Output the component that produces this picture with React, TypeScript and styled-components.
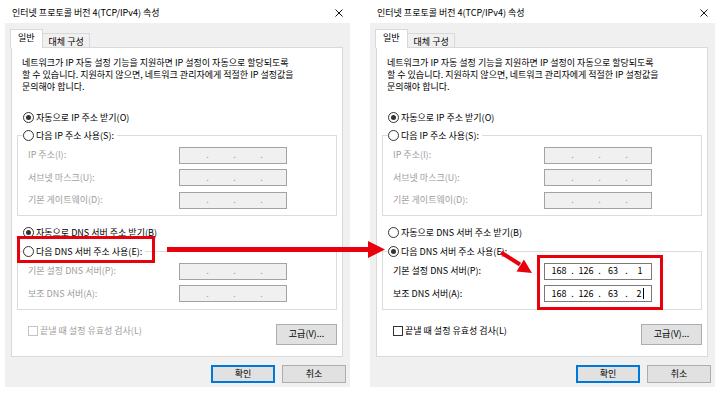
import React from 'react';
import styled, { createGlobalStyle } from 'styled-components';

const GlobalStyle = createGlobalStyle`
  html, body {
    margin: 0;
    padding: 0;
    background: #fff;
  }
  body {
    font-family: "Noto Sans CJK KR", "Noto Sans", sans-serif;
    font-size: 9px;
    color: #000;
  }
  * {
    box-sizing: border-box;
  }
`;

const Page = styled.div`
  position: relative;
  width: 720px;
  height: 393px;
  display: flex;
  justify-content: space-between;
  overflow: hidden;
  background: #fff;
`;

const Window = styled.div`
  width: 355px;
  display: flex;
  flex-direction: column;
`;

const TitleBar = styled.div`
  height: 23px;
  display: flex;
  align-items: center;
  justify-content: space-between;
  padding: 3px 12px 0 12px;
`;

const Title = styled.span`
  font-size: 9px;
  line-height: 12px;
`;

const Body = styled.div`
  margin: 0 5px;
  height: 364px;
  background: #f0f0f0;
  padding: 6px 4px 4px 6px;
  display: flex;
  flex-direction: column;
`;

const TabRow = styled.div`
  height: 18px;
  display: flex;
  align-items: flex-end;
  position: relative;
  z-index: 1;
`;

const Tab = styled.div<{ $active?: boolean }>`
  height: ${(p) => (p.$active ? '19px' : '14px')};
  margin-bottom: ${(p) => (p.$active ? '-1px' : '0')};
  margin-left: ${(p) => (p.$active ? '-1px' : '0')};
  padding: ${(p) => (p.$active ? '2px 7px 0 7px' : '2px 5px 0 6px')};
  background: ${(p) => (p.$active ? '#fff' : '#f0f0f0')};
  border: 1px solid #d9d9d9;
  border-bottom: none;
  border-left: ${(p) => (p.$active ? '1px solid #d9d9d9' : 'none')};
  line-height: 12px;
`;

const Panel = styled.div`
  height: 310px;
  margin-right: 3px;
  background: #fff;
  border: 1px solid #d9d9d9;
  padding: 9px 5px 0 5px;
  display: flex;
  flex-direction: column;
`;

const Description = styled.p`
  margin: 0 0 0 5px;
  line-height: 12px;
`;

const RadioRow = styled.div<{ $mt: number }>`
  height: 13px;
  margin-top: ${(p) => p.$mt}px;
  padding-left: 6px;
  display: flex;
  align-items: center;
  gap: 2px;
`;

const Legend = styled.div`
  height: 13px;
  margin: -7px 0 0 5px;
  padding-right: 3px;
  width: fit-content;
  background: #fff;
  display: flex;
  align-items: center;
  gap: 2px;
`;

const Radio = styled.span<{ $checked?: boolean }>`
  width: 11px;
  height: 11px;
  border: 1px solid #333;
  border-radius: 50%;
  background: #fff;
  display: inline-flex;
  align-items: center;
  justify-content: center;
  flex: none;
  &::after {
    content: '';
    width: 5px;
    height: 5px;
    border-radius: 50%;
    background: ${(p) => (p.$checked ? '#333' : 'transparent')};
  }
`;

const GroupBox = styled.div<{ $mt: number }>`
  margin-top: ${(p) => p.$mt}px;
  border: 1px solid #dcdcdc;
`;

const FieldGrid = styled.div`
  display: grid;
  grid-template-columns: 151px 108px;
  grid-auto-rows: 17px;
  row-gap: 5.5px;
  padding: 4.5px 0 6.5px 10px;
  align-items: center;
`;

const Label = styled.span<{ $disabled?: boolean }>`
  color: ${(p) => (p.$disabled ? '#9d9d9d' : '#000')};
  line-height: 12px;
`;

const IpBox = styled.div<{ $disabled?: boolean }>`
  height: 17px;
  width: 108px;
  padding-left: 3px;
  display: flex;
  align-items: center;
  background: ${(p) => (p.$disabled ? '#f0f0f0' : '#fff')};
  border: 1px solid ${(p) => (p.$disabled ? '#a3a3a3' : '#7a7a7a')};
  color: ${(p) => (p.$disabled ? '#a0a0a0' : '#000')};
  line-height: 12px;
`;

const Octet = styled.span`
  width: 22px;
  text-align: center;
  display: inline-flex;
  justify-content: center;
  align-items: center;
`;

const Dot = styled.span`
  width: 5px;
  text-align: center;
`;

const Caret = styled.span`
  display: inline-block;
  width: 1px;
  height: 11px;
  margin-left: 1px;
  background: #000;
`;

const OptionsRow = styled.div`
  margin-top: 14px;
  padding-left: 11px;
  display: flex;
  align-items: flex-start;
  justify-content: space-between;
`;

const CheckLabel = styled.label<{ $disabled?: boolean }>`
  margin-top: 1px;
  display: flex;
  align-items: center;
  gap: 2px;
  line-height: 12px;
  color: ${(p) => (p.$disabled ? '#9d9d9d' : '#000')};
`;

const CheckBox = styled.span<{ $disabled?: boolean }>`
  width: 10px;
  height: 10px;
  background: #fff;
  border: 1px solid ${(p) => (p.$disabled ? '#c4c4c4' : '#333')};
  flex: none;
`;

const Button = styled.button<{ $default?: boolean; $w: number; $h: number }>`
  width: ${(p) => p.$w}px;
  height: ${(p) => p.$h}px;
  padding: 0;
  font: inherit;
  color: #000;
  background: #e1e1e1;
  border: 1px solid ${(p) => (p.$default ? '#0078d7' : '#adadad')};
  box-shadow: ${(p) => (p.$default ? 'inset 0 0 0 1px #0078d7' : 'none')};
  line-height: 12px;
`;

const Footer = styled.div`
  margin-top: 8px;
  display: flex;
  justify-content: flex-end;
  gap: 7px;
`;

const Overlay = styled.svg`
  position: absolute;
  left: 0;
  top: 0;
  pointer-events: none;
`;

const CloseIcon = () => (
  <svg width="8" height="8" viewBox="0 0 8 8">
    <path d="M0.5 0.5 L7.5 7.5 M7.5 0.5 L0.5 7.5" stroke="#111" strokeWidth="1" />
  </svg>
);

const IpField = ({ value, disabled, caret }: { value?: string[]; disabled?: boolean; caret?: boolean }) => {
  const parts = value ?? ['', '', '', ''];
  return (
    <IpBox $disabled={disabled}>
      {parts.map((v, i) => (
        <React.Fragment key={i}>
          <Octet>
            {v}
            {caret && i === 3 && <Caret />}
          </Octet>
          {i < 3 && <Dot>.</Dot>}
        </React.Fragment>
      ))}
    </IpBox>
  );
};

const Dialog = ({ manualDns }: { manualDns: boolean }) => (
  <Window>
    <TitleBar>
      <Title>인터넷 프로토콜 버전 4(TCP/IPv4) 속성</Title>
      <CloseIcon />
    </TitleBar>
    <Body>
      <TabRow>
        <Tab $active>일반</Tab>
        <Tab>대체 구성</Tab>
      </TabRow>
      <Panel>
        <Description>
          네트워크가 IP 자동 설정 기능을 지원하면 IP 설정이 자동으로 할당되도록
          <br />할 수 있습니다. 지원하지 않으면, 네트워크 관리자에게 적절한 IP 설정값을
          <br />문의해야 합니다.
        </Description>
        <RadioRow $mt={17.5}>
          <Radio $checked />
          <span>자동으로 IP 주소 받기(O)</span>
        </RadioRow>
        <GroupBox $mt={11.5}>
          <Legend>
            <Radio />
            <span>다음 IP 주소 사용(S):</span>
          </Legend>
          <FieldGrid>
            <Label $disabled>IP 주소(I):</Label>
            <IpField disabled />
            <Label $disabled>서브넷 마스크(U):</Label>
            <IpField disabled />
            <Label $disabled>기본 게이트웨이(D):</Label>
            <IpField disabled />
          </FieldGrid>
        </GroupBox>
        <RadioRow $mt={9.5}>
          <Radio $checked={!manualDns} />
          <span>자동으로 DNS 서버 주소 받기(B)</span>
        </RadioRow>
        <GroupBox $mt={12.5}>
          <Legend>
            <Radio $checked={manualDns} />
            <span>다음 DNS 서버 주소 사용(E):</span>
          </Legend>
          <FieldGrid>
            <Label $disabled={!manualDns}>기본 설정 DNS 서버(P):</Label>
            {manualDns ? <IpField value={['168', '126', '63', '1']} /> : <IpField disabled />}
            <Label $disabled={!manualDns}>보조 DNS 서버(A):</Label>
            {manualDns ? <IpField value={['168', '126', '63', '2']} caret /> : <IpField disabled />}
          </FieldGrid>
        </GroupBox>
        <OptionsRow>
          <CheckLabel $disabled={!manualDns}>
            <CheckBox $disabled={!manualDns} />
            끝낼 때 설정 유효성 검사(L)
          </CheckLabel>
          <Button $w={61} $h={21}>
            고급(V)...
          </Button>
        </OptionsRow>
      </Panel>
      <Footer>
        <Button $default $w={64} $h={18}>
          확인
        </Button>
        <Button $w={64} $h={18}>
          취소
        </Button>
      </Footer>
    </Body>
  </Window>
);

const Annotations = () => (
  <Overlay width="720" height="393" viewBox="0 0 720 393">
    <g fill="none" stroke="#e8000d" strokeWidth="3">
      <rect x="18.5" y="237.5" width="135" height="24" />
      <rect x="538.5" y="256.5" width="123" height="52" />
    </g>
    <g fill="#e8000d" stroke="none">
      <rect x="167" y="247" width="202" height="5" />
      <polygon points="368,241 385,249.5 368,258" />
      <path d="M501 252.5 L520 264.5" stroke="#e8000d" strokeWidth="4" />
      <polygon points="532,273 516.5,271.4 523.9,259.6" />
    </g>
  </Overlay>
);

export default function App() {
  return (
    <>
      <GlobalStyle />
      <Page>
        <Dialog manualDns={false} />
        <Dialog manualDns />
        <Annotations />
      </Page>
    </>
  );
}
